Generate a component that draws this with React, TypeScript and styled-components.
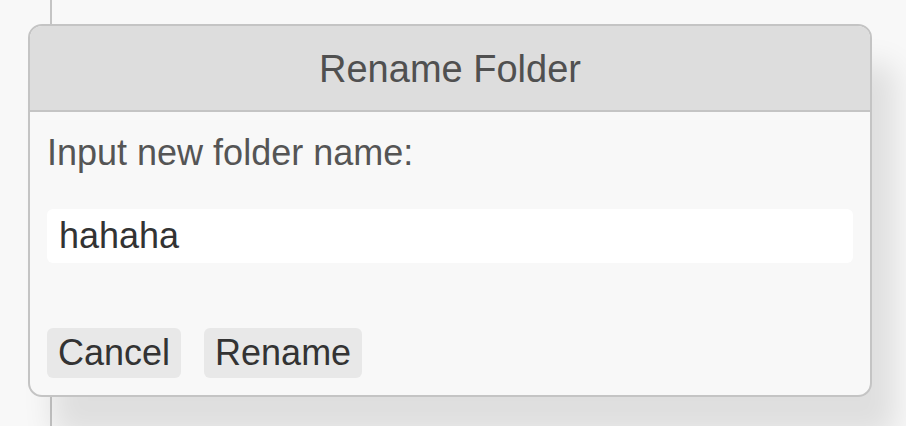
import React from 'react';
import styled, { createGlobalStyle } from 'styled-components';

const GlobalStyle = createGlobalStyle`
  html, body {
    margin: 0;
    padding: 0;
    background: #f8f8f8;
    font-family: "Liberation Sans", Arial, Helvetica, sans-serif;
  }
  * {
    box-sizing: border-box;
  }
`;

const Page = styled.div`
  position: relative;
  display: flex;
  height: 100vh;
  overflow: hidden;
`;

const Sidebar = styled.div`
  width: 52px;
  flex-shrink: 0;
  border-right: 2px solid #c4c4c4;
`;

const Dialog = styled.div`
  position: absolute;
  left: 28px;
  top: 24px;
  width: 844px;
  display: flex;
  flex-direction: column;
  background: #f8f8f8;
  border: 2px solid #c4c4c4;
  border-radius: 14px;
  overflow: hidden;
  box-shadow: 24px 40px 30px rgba(0, 0, 0, 0.1);
`;

const Header = styled.div`
  height: 86px;
  display: flex;
  align-items: center;
  justify-content: center;
  padding-top: 2px;
  background: #dddddd;
  border-bottom: 2px solid #c4c4c4;
`;

const Title = styled.h2`
  margin: 0;
  font-size: 38px;
  line-height: 42px;
  font-weight: 400;
  color: #505050;
`;

const Body = styled.div`
  display: flex;
  flex-direction: column;
  padding: 21px 17px 17px;
`;

const Label = styled.label`
  font-size: 36px;
  line-height: 40px;
  color: #555555;
`;

const TextInput = styled.input`
  margin-top: 36px;
  width: 100%;
  height: 54px;
  padding: 0 12px;
  border: none;
  border-radius: 6px;
  outline: none;
  background: #ffffff;
  font-family: inherit;
  font-size: 36px;
  line-height: 40px;
  color: #333333;
`;

const Actions = styled.div`
  display: flex;
  gap: 23px;
  margin-top: 65px;
`;

const Button = styled.button`
  padding: 5px 11px;
  border: none;
  border-radius: 6px;
  background: #e8e8e8;
  font-family: inherit;
  font-size: 36px;
  line-height: 40px;
  color: #333333;
  cursor: pointer;
`;

const App: React.FC = () => {
  return (
    <Page>
      <GlobalStyle />
      <Sidebar />
      <Dialog>
        <Header>
          <Title>Rename Folder</Title>
        </Header>
        <Body>
          <Label htmlFor="folder-name">Input new folder name:</Label>
          <TextInput id="folder-name" defaultValue="hahaha" />
          <Actions>
            <Button>Cancel</Button>
            <Button>Rename</Button>
          </Actions>
        </Body>
      </Dialog>
    </Page>
  );
};

export default App;
